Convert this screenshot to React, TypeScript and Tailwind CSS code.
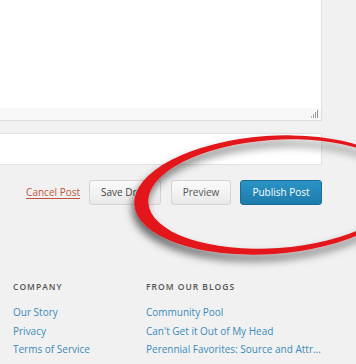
import React from 'react';

const font = { fontFamily: '"Open Sans", "Liberation Sans", sans-serif' };

const Grip = () => (
  <svg width="7" height="8" viewBox="0 0 7 8" className="block">
    <rect x="0" y="6" width="1" height="2" fill="#b5b5b5" />
    <rect x="2" y="4" width="1" height="4" fill="#a8a8a8" />
    <rect x="4" y="2" width="1" height="6" fill="#9c9c9c" />
    <rect x="6" y="0" width="1" height="8" fill="#909090" />
  </svg>
);

// closed path of a rotated ellipse
const oval = (cx: number, cy: number, rx: number, ry: number, deg: number) => {
  const a = (deg * Math.PI) / 180;
  const dx = rx * Math.cos(a);
  const dy = rx * Math.sin(a);
  const x1 = (cx + dx).toFixed(2);
  const y1 = (cy + dy).toFixed(2);
  const x2 = (cx - dx).toFixed(2);
  const y2 = (cy - dy).toFixed(2);
  return `M ${x1} ${y1} A ${rx} ${ry} ${deg} 1 0 ${x2} ${y2} A ${rx} ${ry} ${deg} 1 0 ${x1} ${y1} Z`;
};

const Ring = () => {
  // outer ellipse minus a shifted inner one gives the uneven marker stroke
  const d = oval(270, 195, 136, 59, -4) + ' ' + oval(275, 194, 127, 54, -4);
  return (
    <svg className="absolute inset-0 pointer-events-none" width="356" height="364" viewBox="0 0 356 364">
      <defs>
        <filter id="shade" x="-20%" y="-40%" width="140%" height="180%">
          <feDropShadow dx="-2" dy="6" stdDeviation="4.5" floodColor="#000" floodOpacity="0.6" />
        </filter>
      </defs>
      <path d={d} fillRule="evenodd" fill="#e3151a" filter="url(#shade)" />
    </svg>
  );
};

export default function App() {
  return (
    <div className="relative w-[356px] h-[364px] overflow-hidden bg-[#f1f1f1]" style={font}>
      {/* editor area */}
      <div className="w-[322px] h-[121px] bg-white border-r border-b border-[#dedede] flex flex-col">
        <div className="flex-1" />
        <div className="h-[12px] bg-[#f8f8f8] flex items-end justify-end pr-[3px] pb-[2px]">
          <Grip />
        </div>
      </div>

      {/* second field */}
      <div className="mt-[12px] w-[322px] h-[32px] bg-white border-t border-b border-r border-[#e2e2e2]" />

      {/* actions */}
      <div className="mt-[15px] w-[322px] flex items-center justify-end gap-[9px]">
        <a className="text-[10px] text-[#c4533c] underline underline-offset-2">Cancel Post</a>
        <button className="w-[72px] h-[25px] rounded-[3px] border border-[#d4d4d4] bg-gradient-to-b from-[#fbfbfb] to-[#e9e9e9] text-[10px] text-[#444] text-left pl-[11px]">
          Save Draft
        </button>
        <button className="ml-[1px] w-[60px] h-[25px] rounded-[3px] border border-[#d4d4d4] bg-gradient-to-b from-[#fbfbfb] to-[#e9e9e9] text-[10px] text-[#555]">
          Preview
        </button>
        <button className="w-[82px] h-[25px] rounded-[3px] border border-[#1b6c95] bg-gradient-to-b from-[#2b94c6] to-[#1d7bab] text-[10px] text-white">
          Publish Post
        </button>
      </div>

      {/* footer */}
      <div className="mt-[76px] pl-[13px] flex">
        <div className="w-[133px] flex flex-col">
          <div className="text-[8.5px] font-semibold tracking-[1px] text-[#555] leading-[12px]">COMPANY</div>
          <div className="mt-[13px] flex flex-col gap-[6px] text-[10px] leading-[12.5px] text-[#3a8bb9]">
            <span>Our Story</span>
            <span>Privacy</span>
            <span>Terms of Service</span>
          </div>
        </div>
        <div className="flex flex-col">
          <div className="text-[8.5px] font-semibold tracking-[1px] text-[#555] leading-[12px]">FROM OUR BLOGS</div>
          <div className="mt-[13px] flex flex-col gap-[6px] text-[10px] leading-[12.5px] text-[#3a8bb9]">
            <span>Community Pool</span>
            <span>Can&apos;t Get it Out of My Head</span>
            <span>Perennial Favorites: Source and Attr...</span>
          </div>
        </div>
      </div>

      <Ring />
    </div>
  );
}
